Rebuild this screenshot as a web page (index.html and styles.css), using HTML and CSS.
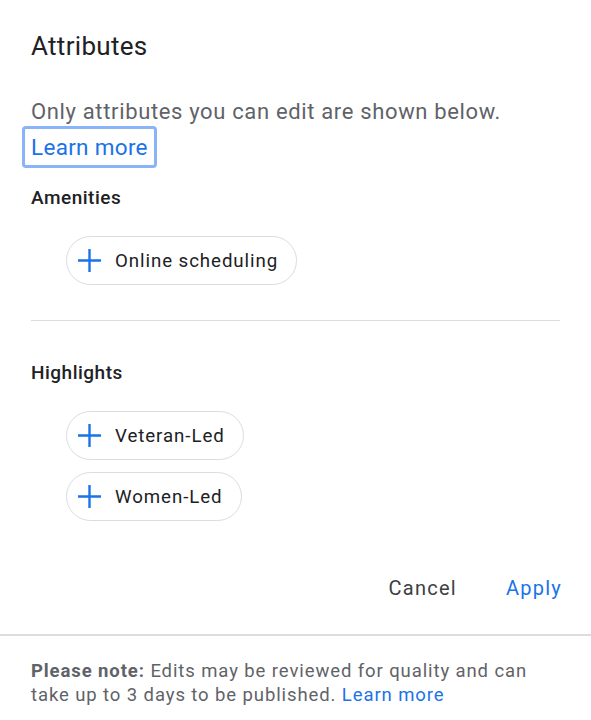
FILE: index.html
```html
<!DOCTYPE html>
<html lang="en">
<head>
<meta charset="utf-8">
<title>Attributes</title>
<link rel="stylesheet" href="styles.css">
</head>
<body>
<div class="dialog">
  <div class="content">
    <h1 class="title">Attributes</h1>
    <p class="intro">Only attributes you can edit are shown below.</p>
    <div class="link-row"><a class="focus-link" href="#">Learn more</a></div>

    <section class="group group-first">
      <h2 class="group-title">Amenities</h2>
      <div class="chips">
        <button class="chip"><svg class="plus" viewBox="0 0 24 24" aria-hidden="true"><path d="M12 0v24M0 12h24"/></svg><span>Online scheduling</span></button>
      </div>
    </section>

    <hr class="divider">

    <section class="group">
      <h2 class="group-title">Highlights</h2>
      <div class="chips">
        <button class="chip"><svg class="plus" viewBox="0 0 24 24" aria-hidden="true"><path d="M12 0v24M0 12h24"/></svg><span>Veteran-Led</span></button>
        <button class="chip"><svg class="plus" viewBox="0 0 24 24" aria-hidden="true"><path d="M12 0v24M0 12h24"/></svg><span>Women-Led</span></button>
      </div>
    </section>

    <div class="actions">
      <button class="btn btn-cancel">Cancel</button>
      <button class="btn btn-apply">Apply</button>
    </div>
  </div>
  <div class="footer">
    <p class="note"><strong>Please note:</strong> Edits may be reviewed for quality and can take up to 3 days to be published. <a class="link" href="#">Learn more</a></p>
  </div>
</div>
</body>
</html>
```

FILE: styles.css
```css
* { box-sizing: border-box; }

body {
  margin: 0;
  background: #ffffff;
  font-family: Roboto, "Noto Sans", Arial, sans-serif;
  color: #202124;
}

.content {
  padding: 30px 31px 0 31px;
}

.title {
  margin: 0;
  font-size: 26px;
  line-height: 32px;
  font-weight: 400;
  letter-spacing: 0.3px;
  color: #202124;
}

.intro {
  margin: 36px 0 0 0;
  font-size: 22px;
  line-height: 28px;
  letter-spacing: 0.65px;
  color: #5f6368;
}

.link-row {
  display: flex;
}

.focus-link {
  display: inline-block;
  margin-left: -9px;
  padding: 4px 6px;
  border: 3px solid #8ab4f8;
  border-radius: 4px;
  font-size: 22.5px;
  line-height: 28px;
  letter-spacing: 0.3px;
  color: #1a73e8;
  text-decoration: none;
}

.group {
  margin-top: 40px;
}

.group-first {
  margin-top: 18px;
}

.group-title {
  margin: 0;
  font-size: 19px;
  line-height: 24px;
  font-weight: 500;
  letter-spacing: 0.5px;
  color: #202124;
}

.chips {
  margin-top: 26px;
  margin-left: 35px;
  display: flex;
  flex-direction: column;
  align-items: flex-start;
  gap: 12px;
}

.chip {
  display: flex;
  align-items: center;
  height: 49px;
  padding: 0 18px 0 11px;
  border: 1px solid #dadce0;
  border-radius: 25px;
  background: #ffffff;
  font-family: Roboto, "Noto Sans", Arial, sans-serif;
  font-size: 18.7px;
  letter-spacing: 0.92px;
  color: #202124;
  cursor: pointer;
}

.plus {
  width: 23px;
  height: 23px;
  margin-right: 14px;
  flex: none;
}

.plus path {
  stroke: #1a73e8;
  stroke-width: 2.5;
  fill: none;
}

.divider {
  margin: 35px 0 0 0;
  border: 0;
  border-top: 1px solid #dadce0;
  height: 0;
}

.actions {
  margin-top: 55px;
  margin-right: -2px;
  display: flex;
  justify-content: flex-end;
  gap: 49px;
}

.btn {
  padding: 0;
  border: 0;
  background: none;
  font-family: Roboto, "Noto Sans", Arial, sans-serif;
  font-size: 20px;
  line-height: 24px;
  letter-spacing: 1.25px;
  cursor: pointer;
}

.btn-cancel { color: #3c4043; }
.btn-apply { color: #1a73e8; }

.footer {
  margin-top: 34px;
  border-top: 2px solid #dadce0;
  padding: 23px 31px 0 31px;
}

.note {
  margin: 0;
  font-size: 18.5px;
  line-height: 24px;
  letter-spacing: 0.9px;
  color: #5f6368;
}

.note strong {
  font-weight: 700;
}

.link {
  color: #1a73e8;
  text-decoration: none;
}
```
